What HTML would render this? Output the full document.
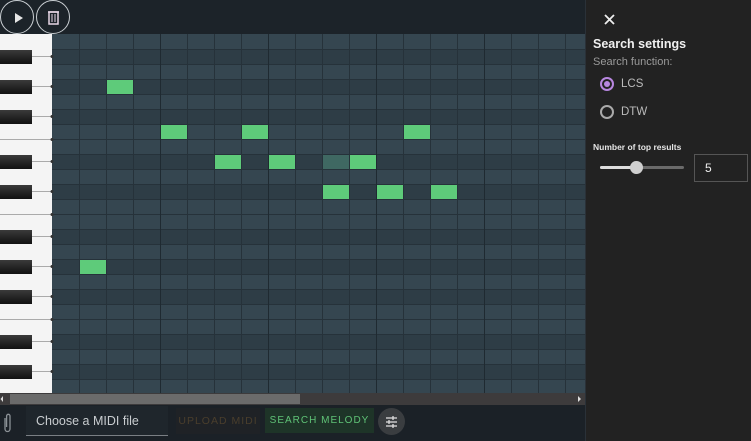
<!DOCTYPE html>
<html><head><meta charset="utf-8"><style>
*{margin:0;padding:0;box-sizing:border-box}
body{width:751px;height:441px;overflow:hidden;background:#1b2127;font-family:"Liberation Sans",sans-serif;position:relative}
.top{position:absolute;left:0;top:0;width:585px;height:34px;background:#1c2329}
.circ{position:absolute;top:0;width:34px;height:34px;border:1px solid #c9ced2;border-radius:50%}
.side{position:absolute;left:585px;top:0;width:166px;height:441px;background:#222222;border-left:1px solid #2a3138}
.bot{position:absolute;left:0;top:405px;width:585px;height:36px;background:#1b2127}
</style></head><body>
<div class="top">
 <div class="circ" style="left:0"><svg width="34" height="34"><path d="M14 12 L22 17 L14 22 Z" fill="#e6e6e6"/></svg></div>
 <div class="circ" style="left:36px"><svg width="34" height="34"><rect x="12" y="11" width="9" height="12" fill="none" stroke="#e7d6e6" stroke-width="1.5"/><line x1="11" y1="11" x2="22" y2="11" stroke="#e7d6e6" stroke-width="1.5"/><line x1="15" y1="13" x2="15" y2="21" stroke="#e7d6e6"/><line x1="18" y1="13" x2="18" y2="21" stroke="#e7d6e6"/></svg></div>
</div>
<svg style="position:absolute;left:0;top:34px" width="585" height="371">
 <defs><linearGradient id="bk" x1="0" y1="0" x2="0" y2="1"><stop offset="0" stop-color="#3a3a3a"/><stop offset="1" stop-color="#111"/></linearGradient></defs>
 <rect x="52" y="0" width="533" height="359" fill="#354650"/>
 <g fill="#2e3d46">
  <rect x="52" y="15" width="533" height="15"/><rect x="52" y="45" width="533" height="15"/><rect x="52" y="75" width="533" height="15"/>
  <rect x="52" y="120" width="533" height="15"/><rect x="52" y="150" width="533" height="15"/>
  <rect x="52" y="195" width="533" height="15"/><rect x="52" y="225" width="533" height="15"/><rect x="52" y="255" width="533" height="15"/>
  <rect x="52" y="300" width="533" height="15"/><rect x="52" y="330" width="533" height="15"/>
 </g>
 <g stroke="#26323a" stroke-width="1">
  <line x1="52" y1="15.5" x2="585" y2="15.5"/><line x1="52" y1="30.5" x2="585" y2="30.5"/><line x1="52" y1="45.5" x2="585" y2="45.5"/><line x1="52" y1="60.5" x2="585" y2="60.5"/><line x1="52" y1="75.5" x2="585" y2="75.5"/><line x1="52" y1="90.5" x2="585" y2="90.5"/><line x1="52" y1="105.5" x2="585" y2="105.5"/><line x1="52" y1="120.5" x2="585" y2="120.5"/><line x1="52" y1="135.5" x2="585" y2="135.5"/><line x1="52" y1="150.5" x2="585" y2="150.5"/><line x1="52" y1="165.5" x2="585" y2="165.5"/><line x1="52" y1="180.5" x2="585" y2="180.5"/><line x1="52" y1="195.5" x2="585" y2="195.5"/><line x1="52" y1="210.5" x2="585" y2="210.5"/><line x1="52" y1="225.5" x2="585" y2="225.5"/><line x1="52" y1="240.5" x2="585" y2="240.5"/><line x1="52" y1="255.5" x2="585" y2="255.5"/><line x1="52" y1="270.5" x2="585" y2="270.5"/><line x1="52" y1="285.5" x2="585" y2="285.5"/><line x1="52" y1="300.5" x2="585" y2="300.5"/><line x1="52" y1="315.5" x2="585" y2="315.5"/><line x1="52" y1="330.5" x2="585" y2="330.5"/><line x1="52" y1="345.5" x2="585" y2="345.5"/>
  <line x1="79.5" y1="0" x2="79.5" y2="359"/><line x1="106.5" y1="0" x2="106.5" y2="359"/><line x1="133.5" y1="0" x2="133.5" y2="359"/><line x1="160.5" y1="0" x2="160.5" y2="359" stroke="#1f2a31"/><line x1="187.5" y1="0" x2="187.5" y2="359"/><line x1="214.5" y1="0" x2="214.5" y2="359"/><line x1="241.5" y1="0" x2="241.5" y2="359"/><line x1="268.5" y1="0" x2="268.5" y2="359" stroke="#1f2a31"/><line x1="295.5" y1="0" x2="295.5" y2="359"/><line x1="322.5" y1="0" x2="322.5" y2="359"/><line x1="349.5" y1="0" x2="349.5" y2="359"/><line x1="376.5" y1="0" x2="376.5" y2="359" stroke="#1f2a31"/><line x1="403.5" y1="0" x2="403.5" y2="359"/><line x1="430.5" y1="0" x2="430.5" y2="359"/><line x1="457.5" y1="0" x2="457.5" y2="359"/><line x1="484.5" y1="0" x2="484.5" y2="359" stroke="#1f2a31"/><line x1="511.5" y1="0" x2="511.5" y2="359"/><line x1="538.5" y1="0" x2="538.5" y2="359"/><line x1="565.5" y1="0" x2="565.5" y2="359"/>
 </g>
 <g fill="#5ecb7a">
  <rect x="107" y="46" width="26" height="14"/>
  <rect x="161" y="91" width="26" height="14"/><rect x="242" y="91" width="26" height="14"/><rect x="404" y="91" width="26" height="14"/>
  <rect x="215" y="121" width="26" height="14"/><rect x="269" y="121" width="26" height="14"/><rect x="350" y="121" width="26" height="14"/>
  <rect x="323" y="151" width="26" height="14"/><rect x="377" y="151" width="26" height="14"/><rect x="431" y="151" width="26" height="14"/>
  <rect x="80" y="226" width="26" height="14"/>
 </g>
 <rect x="323" y="121" width="26" height="14" fill="#3f6862"/>
 <rect x="0" y="0" width="52" height="359" fill="#f4f4f4"/>
 <g stroke="#aaa"><line x1="0" y1="105.5" x2="52" y2="105.5"/><line x1="0" y1="180.5" x2="52" y2="180.5"/><line x1="0" y1="285.5" x2="52" y2="285.5"/>
 <line x1="32" y1="22.5" x2="52" y2="22.5"/><line x1="32" y1="52.5" x2="52" y2="52.5"/><line x1="32" y1="82.5" x2="52" y2="82.5"/><line x1="32" y1="127.5" x2="52" y2="127.5"/><line x1="32" y1="157.5" x2="52" y2="157.5"/><line x1="32" y1="202.5" x2="52" y2="202.5"/><line x1="32" y1="232.5" x2="52" y2="232.5"/><line x1="32" y1="262.5" x2="52" y2="262.5"/><line x1="32" y1="307.5" x2="52" y2="307.5"/><line x1="32" y1="337.5" x2="52" y2="337.5"/></g>
 <g fill="#333"><circle cx="52" cy="22.5" r="1.5"/><circle cx="52" cy="52.5" r="1.5"/><circle cx="52" cy="82.5" r="1.5"/><circle cx="52" cy="105.5" r="1.5"/><circle cx="52" cy="127.5" r="1.5"/><circle cx="52" cy="157.5" r="1.5"/><circle cx="52" cy="180.5" r="1.5"/><circle cx="52" cy="202.5" r="1.5"/><circle cx="52" cy="232.5" r="1.5"/><circle cx="52" cy="262.5" r="1.5"/><circle cx="52" cy="285.5" r="1.5"/><circle cx="52" cy="307.5" r="1.5"/><circle cx="52" cy="337.5" r="1.5"/></g>
 <g fill="url(#bk)">
  <rect x="0" y="16" width="32" height="14"/><rect x="0" y="46" width="32" height="14"/><rect x="0" y="76" width="32" height="14"/>
  <rect x="0" y="121" width="32" height="14"/><rect x="0" y="151" width="32" height="14"/>
  <rect x="0" y="196" width="32" height="14"/><rect x="0" y="226" width="32" height="14"/><rect x="0" y="256" width="32" height="14"/>
  <rect x="0" y="301" width="32" height="14"/><rect x="0" y="331" width="32" height="14"/>
 </g>
 <rect x="0" y="359" width="585" height="12" fill="#3d3b3c"/>
 <rect x="10" y="360" width="290" height="10" fill="#6b6b6b"/>
 <path d="M3 362 L3 368 L0.5 365Z M578 362 L578 368 L581 365Z" fill="#ddd"/>
</svg>
<div class="bot">
 <svg style="position:absolute;left:1px;top:7px" width="12" height="22"><path d="M4 6 V17 a2.5 2.5 0 0 0 5 0 V4 a1.7 1.7 0 0 0 -3.4 0 V15" fill="none" stroke="#8b9196" stroke-width="1.3"/></svg>
 <div style="position:absolute;left:26px;top:1px;width:142px;height:30px;background:#1f262c;border-bottom:1px solid #7a7f84;color:#c9cdd0;font-size:12.5px;line-height:30px;padding-left:10px">Choose a MIDI file</div>
 <div style="position:absolute;left:176px;top:3px;width:84px;height:26px;background:#1f2226;color:#4a3e2c;font-size:10.5px;letter-spacing:1px;line-height:26px;text-align:center">UPLOAD MIDI</div>
 <div style="position:absolute;left:265px;top:3px;width:109px;height:25px;background:#1e3428;color:#5fc276;font-size:10px;letter-spacing:1px;line-height:25px;text-align:center">SEARCH MELODY</div>
 <div style="position:absolute;left:378px;top:3px;width:27px;height:27px;border-radius:50%;background:#3a3d40"><svg width="27" height="27"><g stroke="#ddd" stroke-width="1.3"><line x1="8" y1="10" x2="19" y2="10"/><line x1="8" y1="14" x2="19" y2="14"/><line x1="8" y1="18" x2="19" y2="18"/><line x1="15" y1="8" x2="15" y2="12"/><line x1="11" y1="12" x2="11" y2="16"/><line x1="15" y1="16" x2="15" y2="20"/></g></svg></div>
</div>
<div class="side">
 <svg style="position:absolute;left:17px;top:13px" width="14" height="14"><path d="M2 2 L11 11 M11 2 L2 11" stroke="#eee" stroke-width="1.8"/></svg>
 <div style="position:absolute;left:7px;top:37px;color:#f0f0f0;font-weight:bold;font-size:12.5px">Search settings</div>
 <div style="position:absolute;left:7px;top:56px;color:#9a9a9a;font-size:11px">Search function:</div>
 <div style="position:absolute;left:14px;top:77px;width:14px;height:14px;border:2px solid #b887e0;border-radius:50%"><div style="margin:2px;width:6px;height:6px;border-radius:50%;background:#b887e0"></div></div>
 <div style="position:absolute;left:35px;top:78px;color:#bbb;font-size:11.5px">LCS</div>
 <div style="position:absolute;left:14px;top:105px;width:14px;height:14px;border:2px solid #aaa;border-radius:50%"></div>
 <div style="position:absolute;left:35px;top:106px;color:#bbb;font-size:11.5px">DTW</div>
 <div style="position:absolute;left:7px;top:142px;color:#e6e6e6;font-size:8.5px;font-weight:bold">Number of top results</div>
 <div style="position:absolute;left:14px;top:166px;width:84px;height:3px;background:#6a6a6a;border-radius:2px"></div>
 <div style="position:absolute;left:14px;top:166px;width:38px;height:3px;background:#ddd;border-radius:2px"></div>
 <div style="position:absolute;left:44px;top:161px;width:13px;height:13px;border-radius:50%;background:#cfcfcf"></div>
 <div style="position:absolute;left:108px;top:154px;width:54px;height:28px;border:1px solid #555;color:#eee;font-size:12px;line-height:26px;padding-left:10px">5</div>
</div>
</body></html>
